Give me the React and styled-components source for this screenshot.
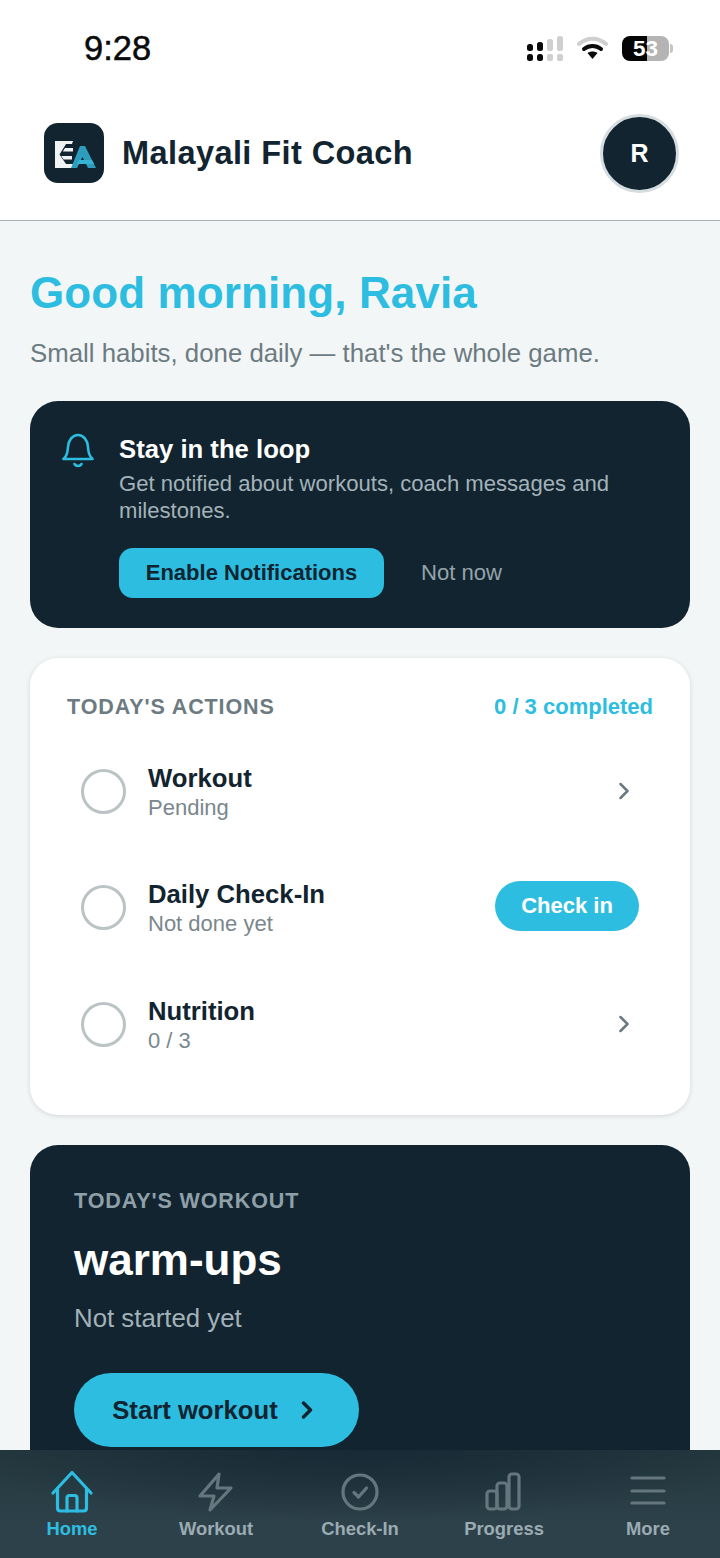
import React from "react";
import styled, { createGlobalStyle } from "styled-components";
import { ChevronRight } from "lucide-react";

const GlobalStyle = createGlobalStyle`
  html, body {
    margin: 0;
    padding: 0;
    background: #f3f6f6;
    font-family: "Liberation Sans", Arial, sans-serif;
  }
  * { box-sizing: border-box; }
`;

const Screen = styled.div`
  position: relative;
  width: 720px;
  height: 1558px;
  overflow: hidden;
  background: #f3f6f6;
`;

const TopArea = styled.header`
  background: #fff;
  border-bottom: 1px solid #a9b3b4;
  height: 221px;
`;

const StatusBar = styled.div`
  height: 96px;
  display: flex;
  justify-content: space-between;
  padding: 29px 47px 0 84px;
`;

const Clock = styled.div`
  font-size: 34.5px;
  line-height: 38px;
  font-family: "Liberation Sans", sans-serif;
  color: #0b0b0b;
  -webkit-text-stroke: 0.5px #0b0b0b;
`;

const StatusIcons = styled.div`
  display: flex;
  align-items: center;
  gap: 14px;
  height: 38px;
`;

const Battery = styled.div`
  display: flex;
  align-items: center;
  gap: 1px;
`;

const BatteryBody = styled.div`
  width: 47px;
  height: 25px;
  border-radius: 8px;
  background: linear-gradient(to right, #050505 0 53%, #b4b4b4 53% 100%);
  color: #fff;
  font-size: 22.5px;
  font-weight: 700;
  line-height: 25px;
  text-align: center;
`;

const BatteryCap = styled.div`
  width: 3px;
  height: 9px;
  border-radius: 0 3px 3px 0;
  background: #c4c4c4;
`;

const BrandRow = styled.div`
  display: flex;
  align-items: center;
  justify-content: space-between;
  padding: 0 41px 0 44px;
  height: 114px;
`;

const Brand = styled.div`
  display: flex;
  align-items: center;
  gap: 18px;
`;

const LogoTile = styled.div`
  width: 60px;
  height: 60px;
  border-radius: 14px;
  background: #122430;
`;

const BrandName = styled.div`
  font-size: 32.5px;
  font-weight: 700;
  color: #122430;
  letter-spacing: 0.42px;
`;

const Avatar = styled.div`
  width: 79px;
  height: 79px;
  border-radius: 50%;
  background: #122430;
  border: 3px solid #d5dde0;
  color: #fff;
  font-size: 25px;
  font-weight: 700;
  display: flex;
  align-items: center;
  justify-content: center;
`;

const Main = styled.main`
  padding: 46px 30px 0;
`;

const Greeting = styled.h1`
  margin: 0;
  font-size: 44px;
  line-height: 52px;
  font-weight: 700;
  color: #2dbde0;
  letter-spacing: 0.1px;
`;

const Tagline = styled.p`
  margin: 18px 0 0;
  font-size: 25.8px;
  line-height: 32px;
  color: #6c7b81;
`;

const NoticeCard = styled.section`
  margin-top: 32px;
  height: 227px;
  border-radius: 28px;
  background: #122430;
  padding: 32px 32px 0;
  display: flex;
  gap: 25px;
`;

const NoticeBody = styled.div`
  flex: 1;
`;

const NoticeTitle = styled.div`
  font-size: 25.7px;
  line-height: 32px;
  font-weight: 700;
  color: #fff;
`;

const NoticeText = styled.div`
  margin-top: 5px;
  font-size: 22.1px;
  line-height: 27px;
  color: #a3b2b9;
`;

const NoticeActions = styled.div`
  margin-top: 24px;
  display: flex;
  align-items: center;
  gap: 37px;
`;

const EnableButton = styled.button`
  width: 265px;
  height: 50px;
  border: 0;
  border-radius: 14px;
  background: #2dbde0;
  color: #122430;
  font: 700 22px "Liberation Sans", sans-serif;
`;

const NotNow = styled.span`
  font-size: 22.1px;
  color: #94a3aa;
`;

const ActionsCard = styled.section`
  margin-top: 30px;
  height: 457px;
  border-radius: 28px;
  background: #fff;
  box-shadow: 0 1px 5px rgba(18, 36, 48, 0.14);
  padding: 34px 37px 0;
`;

const ActionsHeader = styled.div`
  display: flex;
  justify-content: space-between;
  align-items: center;
  height: 30px;
`;

const SectionLabel = styled.div`
  font-size: 21.5px;
  font-weight: 700;
  letter-spacing: 0.9px;
  color: ${(props) => (props.$dark ? "#8fa0a8" : "#6c7b81")};
`;

const Completed = styled.div`
  font-size: 22px;
  font-weight: 700;
  color: #2dbde0;
`;

const ActionList = styled.div`
  margin-top: 35px;
  display: flex;
  flex-direction: column;
`;

const ActionRow = styled.div`
  height: 116.4px;
  padding: 0 14px;
  display: flex;
  align-items: flex-start;
  gap: 22px;
`;

const Ring = styled.div`
  margin-top: 12px;
  width: 45px;
  height: 45px;
  flex: none;
  border-radius: 50%;
  border: 3.5px solid #bcc3c5;
`;

const ActionText = styled.div`
  flex: 1;
  padding-top: 5px;
`;

const ActionTitle = styled.div`
  font-size: 25.7px;
  line-height: 32px;
  font-weight: 700;
  color: #122430;
`;

const ActionSub = styled.div`
  font-size: 22px;
  line-height: 28px;
  color: #7a878d;
`;

const CheckInButton = styled.button`
  margin-top: 8px;
  width: 144px;
  height: 50px;
  border: 0;
  border-radius: 25px;
  background: #2dbde0;
  color: #fff;
  font: 700 22px "Liberation Sans", sans-serif;
`;

const RowChevron = styled(ChevronRight)`
  margin-top: 20px;
  margin-right: 1px;
  color: #6c7b81;
`;

const WorkoutCard = styled.section`
  margin-top: 30px;
  height: 360px;
  border-radius: 28px;
  background: #122430;
  padding: 44px 44px 0;
`;

const WorkoutName = styled.div`
  margin-top: 22px;
  font-size: 44px;
  line-height: 48px;
  font-weight: 700;
  color: #fff;
`;

const WorkoutStatus = styled.div`
  margin-top: 19px;
  font-size: 25.8px;
  line-height: 30px;
  color: #a3b2b9;
`;

const StartButton = styled.button`
  margin-top: 40px;
  width: 285px;
  height: 74px;
  border: 0;
  border-radius: 37px;
  background: #2dbde0;
  color: #122430;
  font: 700 25.7px "Liberation Sans", sans-serif;
  display: flex;
  align-items: center;
  justify-content: center;
  gap: 15px;
`;

const BottomNav = styled.nav`
  position: absolute;
  left: 0;
  right: 0;
  bottom: 0;
  height: 108px;
  display: grid;
  grid-template-columns: repeat(5, 144px);
  background:
    radial-gradient(ellipse 420px 70px at 50% 0, #172a35 0%, rgba(24, 43, 54, 0) 100%),
    linear-gradient(to bottom, #24383f 0%, #2d414a 70%);
`;

const NavItem = styled.div`
  display: flex;
  flex-direction: column;
  align-items: center;
  padding-top: 20px;
`;

const NavIcon = styled.svg`
  width: 44px;
  height: 44px;
  fill: none;
  stroke: ${(props) => (props.$active ? "#2dbde0" : "#66767e")};
  stroke-width: 3.2;
  stroke-linecap: round;
  stroke-linejoin: round;
`;

const NavLabel = styled.span`
  margin-top: 3px;
  font-size: 18.4px;
  line-height: 24px;
  font-weight: 700;
  color: ${(props) => (props.$active ? "#2dbde0" : "#9babb2")};
`;

const CellSignal = () => (
  <svg width="36" height="25" viewBox="0 0 36 25">
    <rect x="0" y="8" width="6" height="7" rx="2.5" fill="#0a0a0a" />
    <rect x="0" y="18" width="6" height="7" rx="2.5" fill="#0a0a0a" />
    <rect x="10" y="6" width="6" height="9" rx="2.5" fill="#0a0a0a" />
    <rect x="10" y="18" width="6" height="7" rx="2.5" fill="#0a0a0a" />
    <rect x="20" y="3" width="6" height="12" rx="2.5" fill="#cfcfcf" />
    <rect x="20" y="18" width="6" height="7" rx="2" fill="#cfcfcf" />
    <rect x="30" y="0" width="6" height="15" rx="2.5" fill="#cfcfcf" />
    <rect x="30" y="18" width="6" height="7" rx="2" fill="#cfcfcf" />
  </svg>
);

const Wifi = () => (
  <svg width="31" height="24" viewBox="0 0 31 24" fill="none">
    <path d="M2 8C10 1 21 1 29 8" stroke="#cfcfcf" strokeWidth="4" strokeLinecap="round" />
    <path d="M7 13C12 9 19 9 24 13" stroke="#0a0a0a" strokeWidth="4" strokeLinecap="round" />
    <path d="M10.5 17C13.5 15 17.5 15 20.5 17L15.5 23Z" fill="#0a0a0a" />
  </svg>
);

const Logo = () => (
  <svg width="60" height="60" viewBox="0 0 60 60">
    <path d="M11 18H29L28 21H22L15.5 31.5L22 41H29V45H11Z" fill="#f1f4f4" />
    <path d="M21 25H29V28.5H18.8Z" fill="#f1f4f4" />
    <path d="M17.2 33H28V36.5H19.6Z" fill="#f1f4f4" />
    <path d="M36 23H41L52 45H44L38.5 34L33 45H27Z" fill="#2c9dbd" />
    <path d="M35 37H48L50 41H33Z" fill="#37b4d4" />
  </svg>
);

const Bell = () => (
  <svg width="32" height="36" viewBox="0 0 32 36" fill="none" stroke="#2dbde0" strokeWidth="2.6" strokeLinecap="round" strokeLinejoin="round" style={{ flex: "none" }}>
    <path d="M1.5 26H30.5C27 22.5 26.5 20 26 14C25.5 7 21.5 2 16 2C10.5 2 6.5 7 6 14C5.5 20 5 22.5 1.5 26Z" />
    <path d="M12.5 31C14 33.6 18 33.6 19.5 31" />
  </svg>
);

const HomeIcon = ({ $active }) => (
  <NavIcon viewBox="0 0 44 44" $active={$active}>
    <path d="M3 23L22 2.5L41 23" />
    <path d="M7.5 19V38C7.5 40 8.5 41 10.5 41H33.5C35.5 41 36.5 40 36.5 38V19" />
    <path d="M17 41V28C17 26.5 18 25.5 19.5 25.5H24.5C26 25.5 27 26.5 27 28V41" />
  </NavIcon>
);

const BoltIcon = () => (
  <NavIcon viewBox="0 0 44 44">
    <path d="M25 4L6 26H20L16 40L37 18H23Z" />
  </NavIcon>
);

const CheckIcon = () => (
  <NavIcon viewBox="0 0 44 44">
    <circle cx="22" cy="22" r="17" />
    <path d="M16 22.5L20.5 27L28.5 18" />
  </NavIcon>
);

const BarsIcon = () => (
  <NavIcon viewBox="0 0 44 44">
    <rect x="5" y="21" width="10" height="18" rx="3" />
    <rect x="15" y="13" width="10" height="26" rx="3" />
    <rect x="27" y="4" width="10" height="35" rx="3" />
  </NavIcon>
);

const MenuIcon = () => (
  <NavIcon viewBox="0 0 44 44">
    <path d="M6 8H38M6 21H38M6 33H38" />
  </NavIcon>
);

const navItems = [
  { label: "Home", icon: <HomeIcon $active />, active: true },
  { label: "Workout", icon: <BoltIcon /> },
  { label: "Check-In", icon: <CheckIcon /> },
  { label: "Progress", icon: <BarsIcon /> },
  { label: "More", icon: <MenuIcon /> },
];

const App = () => {
  return (
    <Screen>
      <GlobalStyle />
      <TopArea>
        <StatusBar>
          <Clock>9:28</Clock>
          <StatusIcons>
            <CellSignal />
            <Wifi />
            <Battery>
              <BatteryBody>53</BatteryBody>
              <BatteryCap />
            </Battery>
          </StatusIcons>
        </StatusBar>
        <BrandRow>
          <Brand>
            <LogoTile>
              <Logo />
            </LogoTile>
            <BrandName>Malayali Fit Coach</BrandName>
          </Brand>
          <Avatar>R</Avatar>
        </BrandRow>
      </TopArea>

      <Main>
        <Greeting>Good morning, Ravia</Greeting>
        <Tagline>Small habits, done daily — that's the whole game.</Tagline>

        <NoticeCard>
          <Bell />
          <NoticeBody>
            <NoticeTitle>Stay in the loop</NoticeTitle>
            <NoticeText>Get notified about workouts, coach messages and milestones.</NoticeText>
            <NoticeActions>
              <EnableButton>Enable Notifications</EnableButton>
              <NotNow>Not now</NotNow>
            </NoticeActions>
          </NoticeBody>
        </NoticeCard>

        <ActionsCard>
          <ActionsHeader>
            <SectionLabel>TODAY'S ACTIONS</SectionLabel>
            <Completed>0 / 3 completed</Completed>
          </ActionsHeader>
          <ActionList>
            <ActionRow>
              <Ring />
              <ActionText>
                <ActionTitle>Workout</ActionTitle>
                <ActionSub>Pending</ActionSub>
              </ActionText>
              <RowChevron size={28} strokeWidth={2.2} />
            </ActionRow>
            <ActionRow>
              <Ring />
              <ActionText>
                <ActionTitle>Daily Check-In</ActionTitle>
                <ActionSub>Not done yet</ActionSub>
              </ActionText>
              <CheckInButton>Check in</CheckInButton>
            </ActionRow>
            <ActionRow>
              <Ring />
              <ActionText>
                <ActionTitle>Nutrition</ActionTitle>
                <ActionSub>0 / 3</ActionSub>
              </ActionText>
              <RowChevron size={28} strokeWidth={2.2} />
            </ActionRow>
          </ActionList>
        </ActionsCard>

        <WorkoutCard>
          <SectionLabel $dark>TODAY'S WORKOUT</SectionLabel>
          <WorkoutName>warm-ups</WorkoutName>
          <WorkoutStatus>Not started yet</WorkoutStatus>
          <StartButton>
            Start workout
            <ChevronRight size={28} strokeWidth={3} />
          </StartButton>
        </WorkoutCard>
      </Main>

      <BottomNav>
        {navItems.map((item) => (
          <NavItem key={item.label}>
            {item.icon}
            <NavLabel $active={item.active}>{item.label}</NavLabel>
          </NavItem>
        ))}
      </BottomNav>
    </Screen>
  );
};

export default App;
